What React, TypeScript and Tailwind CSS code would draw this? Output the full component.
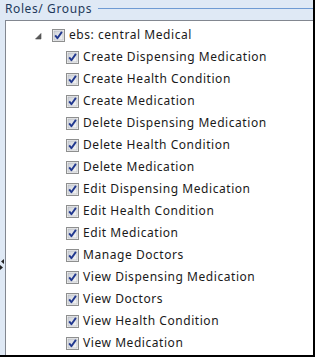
import React from 'react';

const permissions = [
  'Create Dispensing Medication',
  'Create Health Condition',
  'Create Medication',
  'Delete Dispensing Medication',
  'Delete Health Condition',
  'Delete Medication',
  'Edit Dispensing Medication',
  'Edit Health Condition',
  'Edit Medication',
  'Manage Doctors',
  'View Dispensing Medication',
  'View Doctors',
  'View Health Condition',
  'View Medication',
];

// Win7 style checked box
const CheckBox: React.FC = () => (
  <svg width="13" height="13" viewBox="0 0 13 13" className="shrink-0">
    <defs>
      <linearGradient id="cbfill" x1="0" y1="0" x2="1" y2="1">
        <stop offset="0" stopColor="#cdd1d8" />
        <stop offset="1" stopColor="#f7f7f7" />
      </linearGradient>
    </defs>
    <rect x="0.5" y="0.5" width="12" height="12" fill="#f4f4f4" stroke="#8e8f8f" />
    <rect x="2" y="2" width="9" height="9" fill="url(#cbfill)" stroke="#aeb3b9" strokeWidth="0.6" />
    <path d="M3.2 6.4 L5.4 9.2 L9.9 2.9" fill="none" stroke="#21388f" strokeWidth="1.9" strokeLinejoin="round" />
  </svg>
);

const App: React.FC = () => {
  return (
    <div
      className="w-[315px] h-[357px] bg-[#dfe9f5] border-r-2 border-b-2 border-black flex flex-col overflow-hidden"
      style={{ fontFamily: '"Noto Sans", "Open Sans", sans-serif' }}
    >
      {/* Header */}
      <div className="h-[20px] flex pl-[5px] shrink-0">
        <span className="text-[12px] leading-[18px] tracking-[0.6px] text-[#1e395b] whitespace-nowrap">Roles/ Groups</span>
        <div className="flex-1 h-px bg-[#6f9bd3] ml-[6px] mt-[8px]" />
      </div>

      <div className="flex-1 flex">
        {/* Splitter strip */}
        <div className="w-[5px] flex flex-col items-start pt-[239px] gap-[1px]">
          <svg width="4" height="5" viewBox="0 0 4 5">
            <polygon points="4,0 4,5 1,2.5" fill="#222" />
          </svg>
          <svg width="4" height="5" viewBox="0 0 4 5">
            <polygon points="0,0 0,5 3,2.5" fill="#222" />
          </svg>
        </div>

        {/* Tree */}
        <div className="flex-1 bg-white border-l border-t border-[#828790] pt-[3px]">
          <div className="h-[22px] flex items-center pl-[29px]">
            <svg width="7" height="7" viewBox="0 0 7 7" className="mr-[10px] mt-[2px]">
              <polygon points="6,0.5 6,6 0.5,6" fill="#595959" stroke="#4a4a4a" strokeWidth="0.6" />
            </svg>
            <CheckBox />
            <span className="ml-[4px] text-[12px] tracking-[0.55px] text-[#1a1a1a] whitespace-nowrap">ebs: central Medical</span>
          </div>
          {permissions.map(p => (
            <div key={p} className="h-[22px] flex items-center pl-[60px]">
              <CheckBox />
              <span className="ml-[4px] text-[12px] tracking-[0.55px] text-[#1a1a1a] whitespace-nowrap">{p}</span>
            </div>
          ))}
        </div>
      </div>
    </div>
  );
};

export default App;
